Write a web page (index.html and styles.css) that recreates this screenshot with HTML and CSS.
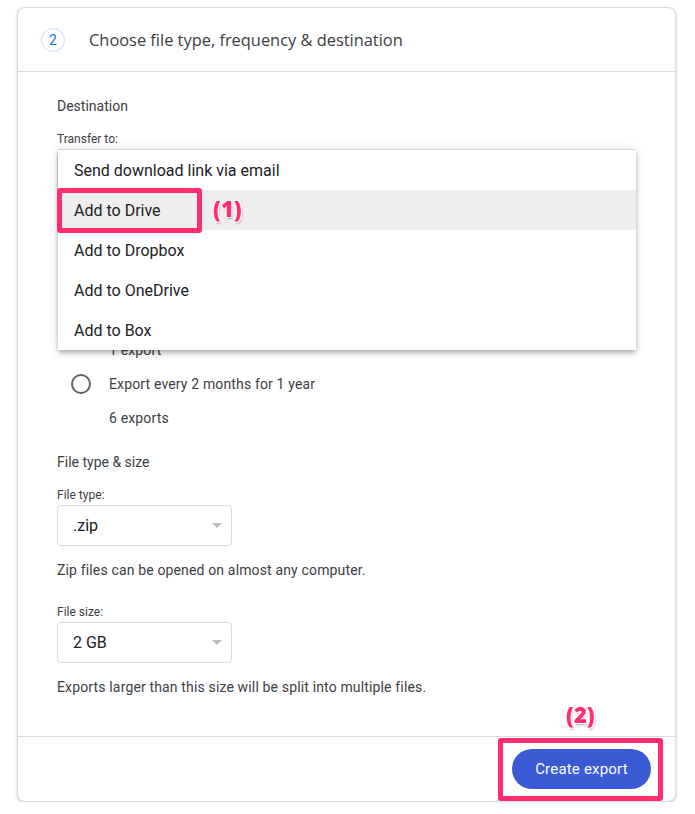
FILE: index.html
```html
<!DOCTYPE html>
<html lang="en">
<head>
<meta charset="utf-8">
<title>Choose file type, frequency &amp; destination</title>
<link rel="stylesheet" href="styles.css">
</head>
<body>
<div class="card">
  <div class="card-header">
    <div class="step">2</div>
    <div class="title">Choose file type, frequency &amp; destination</div>
  </div>
  <div class="card-body">
    <div class="section dest">
      <div class="heading">Destination</div>
      <div class="label">Transfer to:</div>
      <div class="select wide"><i class="caret"></i></div>
      <div class="sub first">1 export</div>
      <div class="radio-row"><span class="radio"></span><span>Export every 2 months for 1 year</span></div>
      <div class="sub">6 exports</div>

      <ul class="menu">
        <li>Send download link via email</li>
        <li class="active">Add to Drive</li>
        <li>Add to Dropbox</li>
        <li>Add to OneDrive</li>
        <li>Add to Box</li>
      </ul>
      <div class="mark mark1"></div>
      <div class="note note1">(1)</div>
    </div>

    <div class="section">
      <div class="heading ft">File type &amp; size</div>
      <div class="label">File type:</div>
      <div class="select"><span>.zip</span><i class="caret"></i></div>
      <div class="text">Zip files can be opened on almost any computer.</div>
      <div class="label size">File size:</div>
      <div class="select"><span>2 GB</span><i class="caret"></i></div>
      <div class="text">Exports larger than this size will be split into multiple files.</div>
    </div>
  </div>
  <div class="card-footer">
    <button class="btn">Create export</button>
    <div class="mark mark2"></div>
    <div class="note note2">(2)</div>
  </div>
</div>
</body>
</html>
```

FILE: styles.css
```css
* { box-sizing: border-box; }
html, body { margin: 0; padding: 0; background: #fff; }
body {
  font-family: Roboto, "Liberation Sans", Arial, sans-serif;
  color: #3c4043;
  padding: 7px 0 0 17px;
}
.card {
  position: relative;
  width: 659px;
  height: 795px;
  border: 1px solid #dadce0;
  border-radius: 8px;
  box-shadow: 0 1px 2px rgba(60,64,67,.18), 0 1px 3px 1px rgba(60,64,67,.08);
  display: flex;
  flex-direction: column;
  background: #fff;
}
.card-header {
  height: 64px;
  border-bottom: 1px solid #dadce0;
  display: flex;
  align-items: center;
  padding-left: 23px;
}
.step {
  width: 24px; height: 24px;
  border: 1px solid #c6dafc;
  border-radius: 50%;
  color: #1a73e8;
  font-size: 14px;
  display: flex; align-items: center; justify-content: center;
  margin-right: 24px;
}
.title {
  font-family: "Open Sans", Roboto, sans-serif;
  font-size: 16.4px;
  color: #3c4043;
}
.card-body {
  flex: 1;
  padding: 24px 0 0 39px;
}
.section { position: relative; }
.heading {
  font-size: 14px;
  line-height: 20px;
  font-weight: 400;
  color: #3c4043;
}
.label {
  font-size: 12px;
  line-height: 16px;
  margin-top: 15px;
  color: #3c4043;
}
.select {
  position: relative;
  width: 175px;
  height: 41px;
  margin-top: 2px;
  border: 1px solid #dadce0;
  border-radius: 4px;
  display: flex;
  align-items: center;
  padding-left: 15px;
  font-size: 16px;
  color: #202124;
}
.select.wide { width: 260px; margin-top: 3px; }
.caret {
  position: absolute;
  right: 9px;
  top: 17px;
  width: 0; height: 0;
  border-left: 5px solid transparent;
  border-right: 5px solid transparent;
  border-top: 5px solid #bdbdbd;
}
.radio-row {
  display: flex;
  align-items: center;
  font-size: 14px;
  line-height: 20px;
  letter-spacing: 0.15px;
  margin-top: 14px;
  color: #3c4043;
}
.radio {
  width: 20px; height: 20px;
  border: 2px solid #5f6368;
  border-radius: 50%;
  margin-left: 14px;
  margin-right: 18px;
  flex: none;
}
.sub {
  font-size: 14px;
  line-height: 20px;
  letter-spacing: 0.15px;
  margin-top: 14px;
  padding-left: 52px;
}
.sub.first { margin-top: 149px; }
.heading.ft { margin-top: 24px; }
.text {
  font-size: 14px;
  line-height: 20px;
  letter-spacing: 0.15px;
  margin-top: 14px;
}
.label.size { margin-top: 24px; }

.menu {
  position: absolute;
  left: 1px;
  top: 53px;
  width: 578px;
  margin: 0;
  padding: 0;
  list-style: none;
  background: #fff;
  border-top: 1px solid #d6d6d6;
  box-shadow: 0 2px 4px -1px rgba(0,0,0,.2), 0 4px 5px 0 rgba(0,0,0,.14), 0 1px 10px 0 rgba(0,0,0,.12);
}
.menu li {
  height: 40px;
  display: flex;
  align-items: center;
  padding-left: 16px;
  font-size: 16px;
  color: #202124;
}
.menu li.active { background: #eeeeee; }

.mark {
  position: absolute;
  border: 5px solid #ff2d6e;
  border-radius: 3px;
}
.mark1 { left: 0; top: 92px; width: 145px; height: 45px; }
.note {
  position: absolute;
  font-family: "Open Sans", "Liberation Sans", sans-serif;
  font-weight: 800;
  font-size: 22px;
  color: #ff2d6e;
  text-shadow: -1px -1px 0 #fff, 1px -1px 0 #fff, -1px 1px 0 #fff, 1px 1px 0 #fff, 1px 2px 2px rgba(0,0,0,.35);
  line-height: 26px;
}
.note1 { left: 156px; top: 99px; }

.card-footer {
  position: relative;
  height: 65px;
  border-top: 1px solid #dadce0;
  display: flex;
  justify-content: flex-end;
  align-items: flex-start;
  padding: 12px 24px 0 0;
}
.btn {
  height: 40px;
  width: 139px;
  border: none;
  border-radius: 20px;
  background: #3b5bd5;
  color: #fff;
  font-family: Roboto, sans-serif;
  font-size: 15px;
  font-weight: 400;
  letter-spacing: 0.2px;
  padding: 0;
}
.mark2 { right: 12px; top: 1px; width: 165px; height: 63px; }
.note2 { left: 548px; top: -36px; }
```
